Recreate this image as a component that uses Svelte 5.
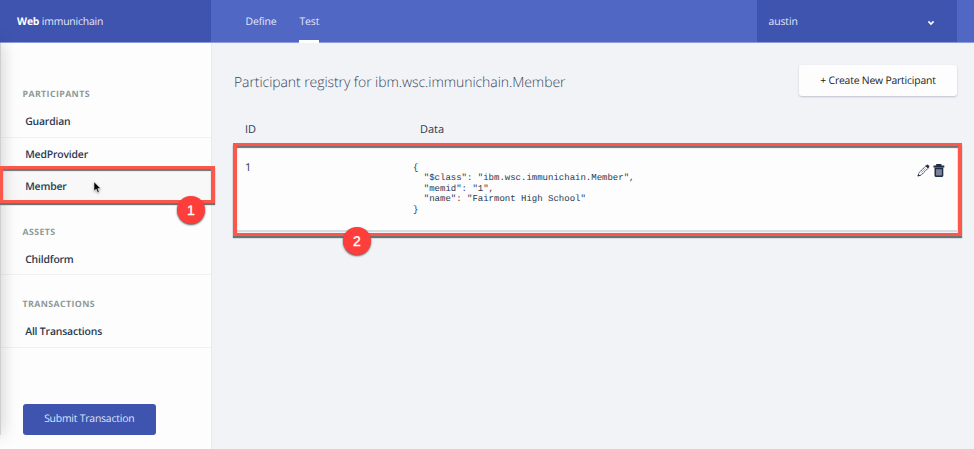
<script>
  const groups = [
    { title: 'PARTICIPANTS', items: ['Guardian', 'MedProvider', 'Member'] },
    { title: 'ASSETS', items: ['Childform'] },
    { title: 'TRANSACTIONS', items: ['All Transactions'] }
  ];
  const selected = 'Member';
  const record = JSON.stringify(
    { $class: 'ibm.wsc.immunichain.Member', memid: '1', name: 'Fairmont High School' },
    null,
    2
  );
</script>

<div class="app">
  <header>
    <div class="brand"><b>Web</b>&nbsp;immunichain</div>
    <nav>
      <span class="tab">Define</span>
      <span class="tab active">Test</span>
    </nav>
    <div class="user">
      <span>austin</span>
      <svg width="8" height="6" viewBox="0 0 8 6"><path d="M1.4 1.4 4 4 6.6 1.4" fill="none" stroke="#fff" stroke-width="1.7" /></svg>
    </div>
  </header>

  <div class="body">
    <aside>
      {#each groups as group}
        <section>
          <h2>{group.title}</h2>
          {#each group.items as item}
            <div class="item" class:selected={item === selected}>{item}</div>
          {/each}
        </section>
      {/each}
      <button class="submit">Submit Transaction</button>
    </aside>

    <main>
      <div class="top">
        <h1>Participant registry for ibm.wsc.immunichain.Member</h1>
        <button class="create">+ Create New Participant</button>
      </div>
      <div class="columns"><span class="id">ID</span><span>Data</span></div>
      <div class="row">
        <span class="id">1</span>
        <pre>{record}</pre>
        <div class="actions">
          <svg width="13" height="13" viewBox="0 0 13 13">
            <path d="M1 12 2 8.7 8.8 1.9 11.1 4.2 4.3 11Z" fill="#fdfdfe" stroke="#34405a" stroke-width="1" stroke-dasharray="2.4 .5" />
            <path d="M8.5 2.1 9.8.8Q10.5.3 11.2.9L12.1 1.8Q12.7 2.5 12 3.3L10.9 4.5Z" fill="#26324c" />
            <path d="M.6 12.4 1.3 10 3 11.7Z" fill="#26324c" />
            <path d="M4.3 8.7 8.6 4.4" stroke="#8790a0" stroke-width=".7" />
          </svg>
          <svg width="12" height="13" viewBox="0 0 12 13">
            <path d="M3.2 0H8.4V1.5H11.3V3.6H.5V1.5H3.2Z" fill="#202d48" />
            <path d="M1.5 3.5H10.3V11.6Q10.3 13 9 13H2.8Q1.5 13 1.5 11.6Z" fill="#202d48" />
            <path d="M3.1 5.3H8.8V11.4H3.1Z" fill="#858c9b" />
            <path d="M5 5.3V11.4M7 5.3V11.4" stroke="#68718a" stroke-width=".7" />
          </svg>
        </div>
      </div>
    </main>
  </div>

  <div class="edge"></div>
  <div class="frame first"></div>
  <div class="frame second"></div>
  <div class="badge one">1</div>
  <div class="badge two">2</div>
  <svg class="cursor" width="9" height="13" viewBox="0 0 9 13">
    <path d="M1 .8V10L3.2 8.1 4.7 11.6 6.2 10.9 4.8 7.5H7.7Z" fill="#050505" stroke="#fff" stroke-width=".5" />
  </svg>
</div>

<style>
  :global(body) { background: #f1f3f7; }
  * { box-sizing: border-box; }
  .app {
    position: relative;
    width: 974px;
    height: 449px;
    overflow: hidden;
    display: flex;
    flex-direction: column;
    font-family: 'Open Sans', sans-serif;
    text-rendering: geometricPrecision;
    background: #f1f3f7;
    color: #2c3850;
  }
  header {
    display: flex;
    height: 43px;
    flex: none;
    background: #5067c4;
    border-bottom: 1px solid #8c9bdb;
    color: #e4e8fb;
    font-size: 10.4px;
    letter-spacing: -.17px;
  }
  .brand {
    width: 211px;
    padding-left: 17px;
    line-height: 44px;
    height: 42px;
    background: #3f54af;
  }
  .brand b { color: #fff; }
  nav { display: flex; flex: 1; gap: 23px; padding-left: 34.5px; }
  .tab { height: 43px; line-height: 44px; letter-spacing: -.12px; }
  .active { border-bottom: 3px solid #fff; }
  .user {
    width: 200px;
    margin-right: 17px;
    padding: 1px 22px 0 11.5px;
    display: flex;
    align-items: center;
    justify-content: space-between;
    letter-spacing: -.08px;
    background: #3f54af;
  }
  .user svg { margin-top: 2px; }
  .body { display: flex; flex: 1; }
  aside {
    width: 212px;
    padding-top: 40px;
    background: #fdfdfe;
    border-right: 1px solid #e8eaf1;
  }
  section { margin-bottom: 18px; }
  h2 {
    margin: 0;
    padding-left: 22.5px;
    height: 22px;
    line-height: 22px;
    font-size: 8.8px;
    font-weight: 700;
    letter-spacing: .4px;
    color: #8c9997;
  }
  .item {
    height: 32.6px;
    padding-left: 25.2px;
    line-height: 34px;
    font-size: 10.4px;
    font-weight: 600;
    letter-spacing: -.17px;
    border-bottom: 1px solid #f1f1f3;
  }
  .selected { background: #f8f8f8; }
  button { border: 0; font: 10.4px 'Open Sans', sans-serif; text-rendering: geometricPrecision; letter-spacing: -.2px; }
  .submit {
    display: block;
    width: 133.5px;
    height: 31px;
    margin: 56px 0 0 22.5px;
    padding: 0;
    border-radius: 3px;
    background: #3f54af;
    color: #dfe4fb;
  }
  main { flex: 1; padding: 22px 17px 0 22px; }
  .top { display: flex; justify-content: space-between; height: 31px; }
  h1 { margin: 0; font-size: 14px; font-weight: 300; letter-spacing: -.07px; line-height: 36px; color: #39465c; }
  .create {
    width: 158px;
    padding: 0;
    border-radius: 3px;
    background: #fdfdfe;
    color: #222;
    box-shadow: 0 1px 2px rgba(40, 50, 80, .25);
  }
  .columns { display: flex; height: 50px; padding: 24px 0 0 11px; font-size: 11px; line-height: 20px; }
  .columns .id { width: 175px; }
  .row {
    display: flex;
    height: 86px;
    margin-left: 1px;
    padding: 15px 12px 0 10px;
    background: #fdfdfe;
    border-bottom: 2px solid #d9dde1;
  }
  .row .id { width: 168px; font-size: 11px; line-height: 14px; }
  pre { margin: 0; flex: 1; font: 9px/10.4px 'Liberation Mono', monospace; padding-top: 2px; }
  .actions { display: flex; gap: 3px; padding-top: 3px; }
  .edge {
    position: absolute;
    left: -8px;
    top: 43px;
    width: 9px;
    height: 392px;
    background: #cfcfd1;
    box-shadow: 0 0 16px rgba(0, 0, 0, .25);
  }
  .frame {
    position: absolute;
    border: solid #fc574b;
    border-width: 3px 4px;
    box-shadow: 0 2px 1px #6b7474, inset 0 2px 1px #6b7474;
  }
  .first { left: -1px; top: 166px; width: 216px; height: 37px; }
  .second { left: 233px; top: 143px; width: 729px; height: 93px; }
  .badge {
    position: absolute;
    width: 28px;
    height: 28px;
    border-radius: 50%;
    background: #fd3e3a;
    color: #fff;
    font: 14px/28px 'Liberation Sans', sans-serif;
    -webkit-text-stroke: .35px #fff;
    text-align: center;
    box-shadow: 0 1px 2px #555;
  }
  .one { left: 177px; top: 195.5px; }
  .two { left: 343px; top: 226.5px; }
  .cursor { position: absolute; left: 92.5px; top: 180.5px; filter: drop-shadow(0 1px 1px rgba(0, 0, 0, .3)); }
</style>
